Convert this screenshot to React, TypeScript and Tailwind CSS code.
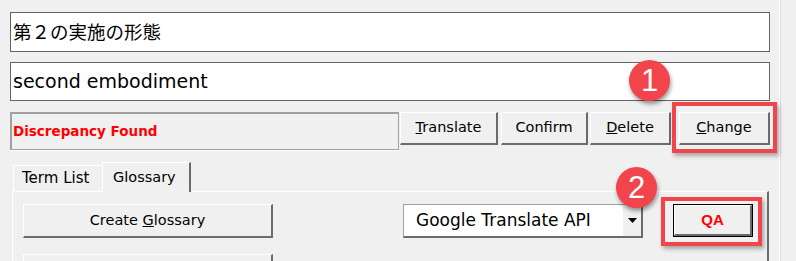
import React from "react";

const ui = "font-['DejaVu_Sans','Noto_Sans_CJK_JP',sans-serif]";

function Btn({ children, className = "" }: { children: React.ReactNode; className?: string }) {
    return (
        <div
            className={`shrink-0 flex items-center justify-center bg-[#f0f0f0] border-t border-l border-t-white border-l-white border-r-2 border-b-2 border-r-[#6b6b6b] border-b-[#6b6b6b] text-[14.5px] text-black ${className}`}
        >
            {children}
        </div>
    );
}

function Badge({ n, className }: { n: string; className: string }) {
    return (
        <div
            className={`absolute w-[41px] h-[41px] rounded-full bg-[#f1444b] flex items-center justify-center text-white text-[31px] leading-none font-['Liberation_Sans',sans-serif] shadow-[1px_3px_4px_rgba(0,0,0,0.4)] ${className}`}
        >
            {n}
        </div>
    );
}

export default function App() {
    return (
        <div className={`relative w-[796px] h-[261px] overflow-hidden bg-[#f0f0f0] flex ${ui}`}>
            <div className="w-[779px] shrink-0 pl-[10px] pt-[12px] flex flex-col">
                <div className="shrink-0 w-[760px] h-[40px] border border-[#646464] bg-white flex items-center pl-[2px] text-[18.5px] text-black font-['Noto_Sans_CJK_JP',sans-serif]">
                    第２の実施の形態
                </div>
                <div className="shrink-0 mt-[10px] w-[760px] h-[39px] border border-[#646464] bg-white flex items-center pl-[2px] text-[19px] text-black">
                    second embodiment
                </div>

                <div className="shrink-0 mt-[11px] flex items-start">
                    <div className="shrink-0 w-[389px] h-[38px] border-t-2 border-l-2 border-r border-b border-[#a0a0a0] shadow-[0_1px_0_#ffffff] flex items-center pl-[1px] text-[13.5px] font-bold text-[#ff0000]">
                        Discrepancy Found
                    </div>
                    <Btn className="ml-[1px] w-[98px] h-[33px]">
                        <span><u>T</u>ranslate</span>
                    </Btn>
                    <Btn className="ml-[3px] w-[87px] h-[33px]">Confirm</Btn>
                    <Btn className="ml-[2px] w-[81px] h-[33px]">
                        <span><u>D</u>elete</span>
                    </Btn>
                    <div className="relative ml-[8px]">
                        <Btn className="w-[91px] h-[33px]">
                            <span><u>C</u>hange</span>
                        </Btn>
                        <div className="absolute -left-[7px] -right-[7px] -top-[10px] -bottom-[8px] border-[4px] border-[#f1444b] shadow-[2px_3px_4px_rgba(0,0,0,0.3)]" />
                    </div>
                </div>

                <div className="shrink-0 mt-[12px] ml-[3px] flex items-end h-[29px] text-[14.5px]">
                    <div className="w-[89px] h-[26px] border-t border-l border-white flex items-center pl-[8px] text-[15px]">
                        Term List
                    </div>
                    <div className="relative z-10 w-[89px] h-[30px] -mb-[1px] bg-[#f0f0f0] border-t border-l border-white border-r-2 border-r-[#6b6b6b] flex items-start pt-[4px] pl-[10px]">
                        Glossary
                    </div>
                </div>

                <div className="ml-[2px] w-[757px] flex-1 border-t border-l border-white border-r-2 border-r-[#6b6b6b] pl-[10px] pt-[12px] flex items-start">
                    <div className="shrink-0 flex flex-col gap-[16px]">
                        <Btn className="w-[250px] h-[34px]">
                            <span>Create <u>G</u>lossary</span>
                        </Btn>
                        <Btn className="w-[250px] h-[34px]">{""}</Btn>
                    </div>
                    <div className="shrink-0 ml-[130px] w-[240px] h-[34px] bg-white border-t border-l border-[#a0a0a0] border-r-2 border-b-2 border-r-[#6b6b6b] border-b-[#6b6b6b] flex">
                        <div className="flex-1 flex items-center pl-[12px] text-[17px]">Google Translate API</div>
                        <div className="shrink-0 w-[19px] bg-[#f0f0f0] border-l border-white flex items-center justify-center">
                            <svg width="9" height="5" viewBox="0 0 9 5"><path d="M0 0h9L4.5 5z" fill="#000" /></svg>
                        </div>
                    </div>
                    <div className="shrink-0 relative ml-[30px]">
                        <div className="w-[80px] h-[33px] border border-black">
                            <Btn className="w-full h-full">
                                <span className="font-['Liberation_Sans',sans-serif] font-bold text-[15px] text-[#ff0000]">QA</span>
                            </Btn>
                        </div>
                        <div className="absolute -left-[12px] -right-[9px] -top-[7px] -bottom-[9px] border-[4px] border-[#f1444b] shadow-[2px_3px_4px_rgba(0,0,0,0.3)]" />
                    </div>
                </div>
            </div>
            <div className="w-[1px] bg-white" />
            <div className="w-[1px] bg-[#dcdcdc]" />

            <Badge n="1" className="left-[629px] top-[60px]" />
            <Badge n="2" className="left-[616px] top-[167px]" />
        </div>
    );
}
